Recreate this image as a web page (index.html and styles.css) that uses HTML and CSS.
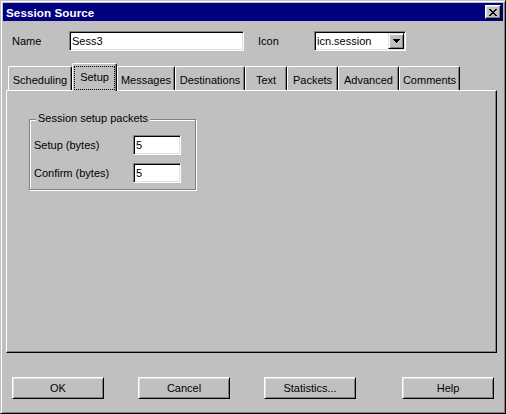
FILE: index.html
```html
<!DOCTYPE html>
<html>
<head>
<meta charset="utf-8">
<title>Session Source</title>
<link rel="stylesheet" href="styles.css">
</head>
<body>
<div class="window">
  <div class="titlebar">
    <span class="title">Session Source</span>
    <button class="close" type="button" aria-label="Close">
      <svg class="close-glyph" width="8" height="7" viewBox="0 0 8 7" shape-rendering="crispEdges">
        <path d="M0 0h2v1H0zM6 0h2v1H6zM1 1h2v1H1zM5 1h2v1H5zM2 2h4v1H2zM3 3h2v1H3zM2 4h4v1H2zM1 5h2v1H1zM5 5h2v1H5zM0 6h2v1H0zM6 6h2v1H6z" fill="#000"/>
      </svg>
    </button>
  </div>
  <div class="content">
    <div class="top-row">
      <span class="lbl lbl-name">Name</span>
      <div class="field field-name">Sess3</div>
      <span class="lbl lbl-icon">Icon</span>
      <div class="field combo">
        <span class="combo-text">icn.session</span>
        <span class="combo-btn">
          <svg width="7" height="4" viewBox="0 0 7 4" shape-rendering="crispEdges">
            <path d="M0 0h7v1H0zM1 1h5v1H1zM2 2h3v1H2zM3 3h1v1H3z" fill="#000"/>
          </svg>
        </span>
      </div>
    </div>
    <div class="tabs">
      <div class="tab tab-scheduling">Scheduling</div>
      <div class="tab tab-setup active"><span class="focus">Setup</span></div>
      <div class="tab tab-messages">Messages</div>
      <div class="tab tab-destinations">Destinations</div>
      <div class="tab tab-text">Text</div>
      <div class="tab tab-packets">Packets</div>
      <div class="tab tab-advanced">Advanced</div>
      <div class="tab tab-comments">Comments</div>
    </div>
    <div class="panel">
      <div class="group">
        <div class="group-title">Session setup packets</div>
        <div class="row row-first">
          <span class="row-label">Setup (bytes)</span>
          <div class="field field-small">5</div>
        </div>
        <div class="row">
          <span class="row-label">Confirm (bytes)</span>
          <div class="field field-small">5</div>
        </div>
      </div>
    </div>
    <div class="buttons">
      <button class="btn btn-ok" type="button">OK</button>
      <button class="btn btn-cancel" type="button">Cancel</button>
      <button class="btn btn-stats" type="button">Statistics...</button>
      <button class="btn btn-help" type="button">Help</button>
    </div>
  </div>
</div>
</body>
</html>
```
FILE: styles.css
```css
* {
  box-sizing: border-box;
}

html,
body {
  margin: 0;
  padding: 0;
  background: #c0c0c0;
}

body {
  font-family: "Liberation Sans", Arial, sans-serif;
  font-size: 11px;
  line-height: 13px;
  color: #000;
}

.window {
  width: 506px;
  height: 414px;
  border: 1px solid;
  border-color: #c0c0c0 #000 #000 #c0c0c0;
  box-shadow: inset 1px 1px #fff, inset -1px -1px #808080;
  padding: 2px;
  background: #c0c0c0;
}

/* Title bar */
.titlebar {
  height: 18px;
  background: #000080;
  color: #fff;
  display: flex;
  align-items: center;
  justify-content: space-between;
  padding: 0 2px 0 3px;
}

.title {
  font-weight: bold;
  font-size: 11.6px;
  line-height: 13px;
  letter-spacing: 0.1px;
}

.close {
  width: 16px;
  height: 14px;
  padding: 0;
  margin: 0;
  border: 1px solid;
  border-color: #fff #000 #000 #fff;
  box-shadow: inset -1px -1px #808080, inset 1px 1px #dfdfdf;
  background: #c0c0c0;
  display: flex;
  align-items: center;
  justify-content: center;
}

.close-glyph {
  display: block;
  margin-top: 1px;
}

/* Main content */
.content {
  padding-top: 10px;
}

.top-row {
  display: flex;
  align-items: center;
  height: 20px;
  padding-left: 9px;
}

.lbl-name {
  width: 57px;
}

.lbl-icon {
  width: 56px;
  margin-left: 14px;
}

.field {
  height: 20px;
  background: #fff;
  border: 1px solid;
  border-color: #808080 #fff #fff #808080;
  box-shadow: inset 1px 1px #000, inset -1px -1px #dfdfdf;
  padding: 0 0 0 2px;
  display: flex;
  align-items: center;
  white-space: nowrap;
}

.field-name {
  width: 175px;
}

.combo {
  width: 92px;
  padding: 1px 1px 1px 2px;
}

.combo-text {
  flex: 1;
}

.combo-btn {
  width: 16px;
  height: 16px;
  border: 1px solid;
  border-color: #dfdfdf #000 #000 #dfdfdf;
  box-shadow: inset 1px 1px #fff, inset -1px -1px #808080;
  background: #c0c0c0;
  display: flex;
  align-items: center;
  justify-content: center;
}

.combo-btn svg {
  display: block;
  margin-left: 1px;
}

/* Tabs */
.tabs {
  display: flex;
  align-items: flex-end;
  height: 27px;
  margin-top: 12px;
  padding-left: 5px;
  position: relative;
  z-index: 1;
}

.tab {
  height: 24px;
  border-top: 1px solid #fff;
  border-left: 1px solid #fff;
  border-right: 1px solid #000;
  box-shadow: inset -1px 0 #808080;
  border-radius: 2px 2px 0 0;
  background: #c0c0c0;
  text-align: center;
  padding-top: 7px;
  white-space: nowrap;
}

.tab.active {
  height: 28px;
  margin-bottom: -1px;
  padding-top: 0;
}

.focus {
  display: block;
  margin: 2px 1px 0 1px;
  height: 24px;
  border: 1px dotted #000;
  padding-top: 4px;
}

.tab-scheduling { width: 64px; }
.tab-setup { width: 45px; }
.tab-messages { width: 58px; }
.tab-destinations { width: 70px; }
.tab-text { width: 42px; }
.tab-packets { width: 51px; }
.tab-advanced { width: 61px; }
.tab-comments { width: 61px; }

/* Panel */
.panel {
  margin-left: 3px;
  width: 491px;
  height: 263px;
  border: 1px solid;
  border-color: #fff #000 #000 #fff;
  box-shadow: inset -1px -1px #808080;
  padding: 28px 0 0 22px;
}

.group {
  width: 167px;
  height: 71px;
  border: 1px solid #808080;
  box-shadow: inset 1px 1px #fff, 1px 1px #fff;
  padding: 0 0 0 4px;
}

.group-title {
  width: fit-content;
  margin: -8px 0 0 2px;
  padding: 0 2px;
  background: #c0c0c0;
}

.row {
  display: flex;
  align-items: center;
  height: 20px;
  margin-top: 8px;
}

.row-first {
  margin-top: 10px;
}

.row-label {
  width: 99px;
}

.field-small {
  width: 48px;
}

/* Buttons */
.buttons {
  display: flex;
  margin-top: 24px;
  padding-left: 9px;
}

.btn {
  width: 92px;
  height: 22px;
  margin: 0;
  padding: 0;
  border: 1px solid;
  border-color: #fff #000 #000 #fff;
  box-shadow: inset 1px 1px #dfdfdf, inset -1px -1px #808080;
  background: #c0c0c0;
  font: inherit;
  color: #000;
  text-align: center;
}

.btn-cancel,
.btn-stats {
  margin-left: 34px;
}

.btn-help {
  margin-left: 46px;
}
```
